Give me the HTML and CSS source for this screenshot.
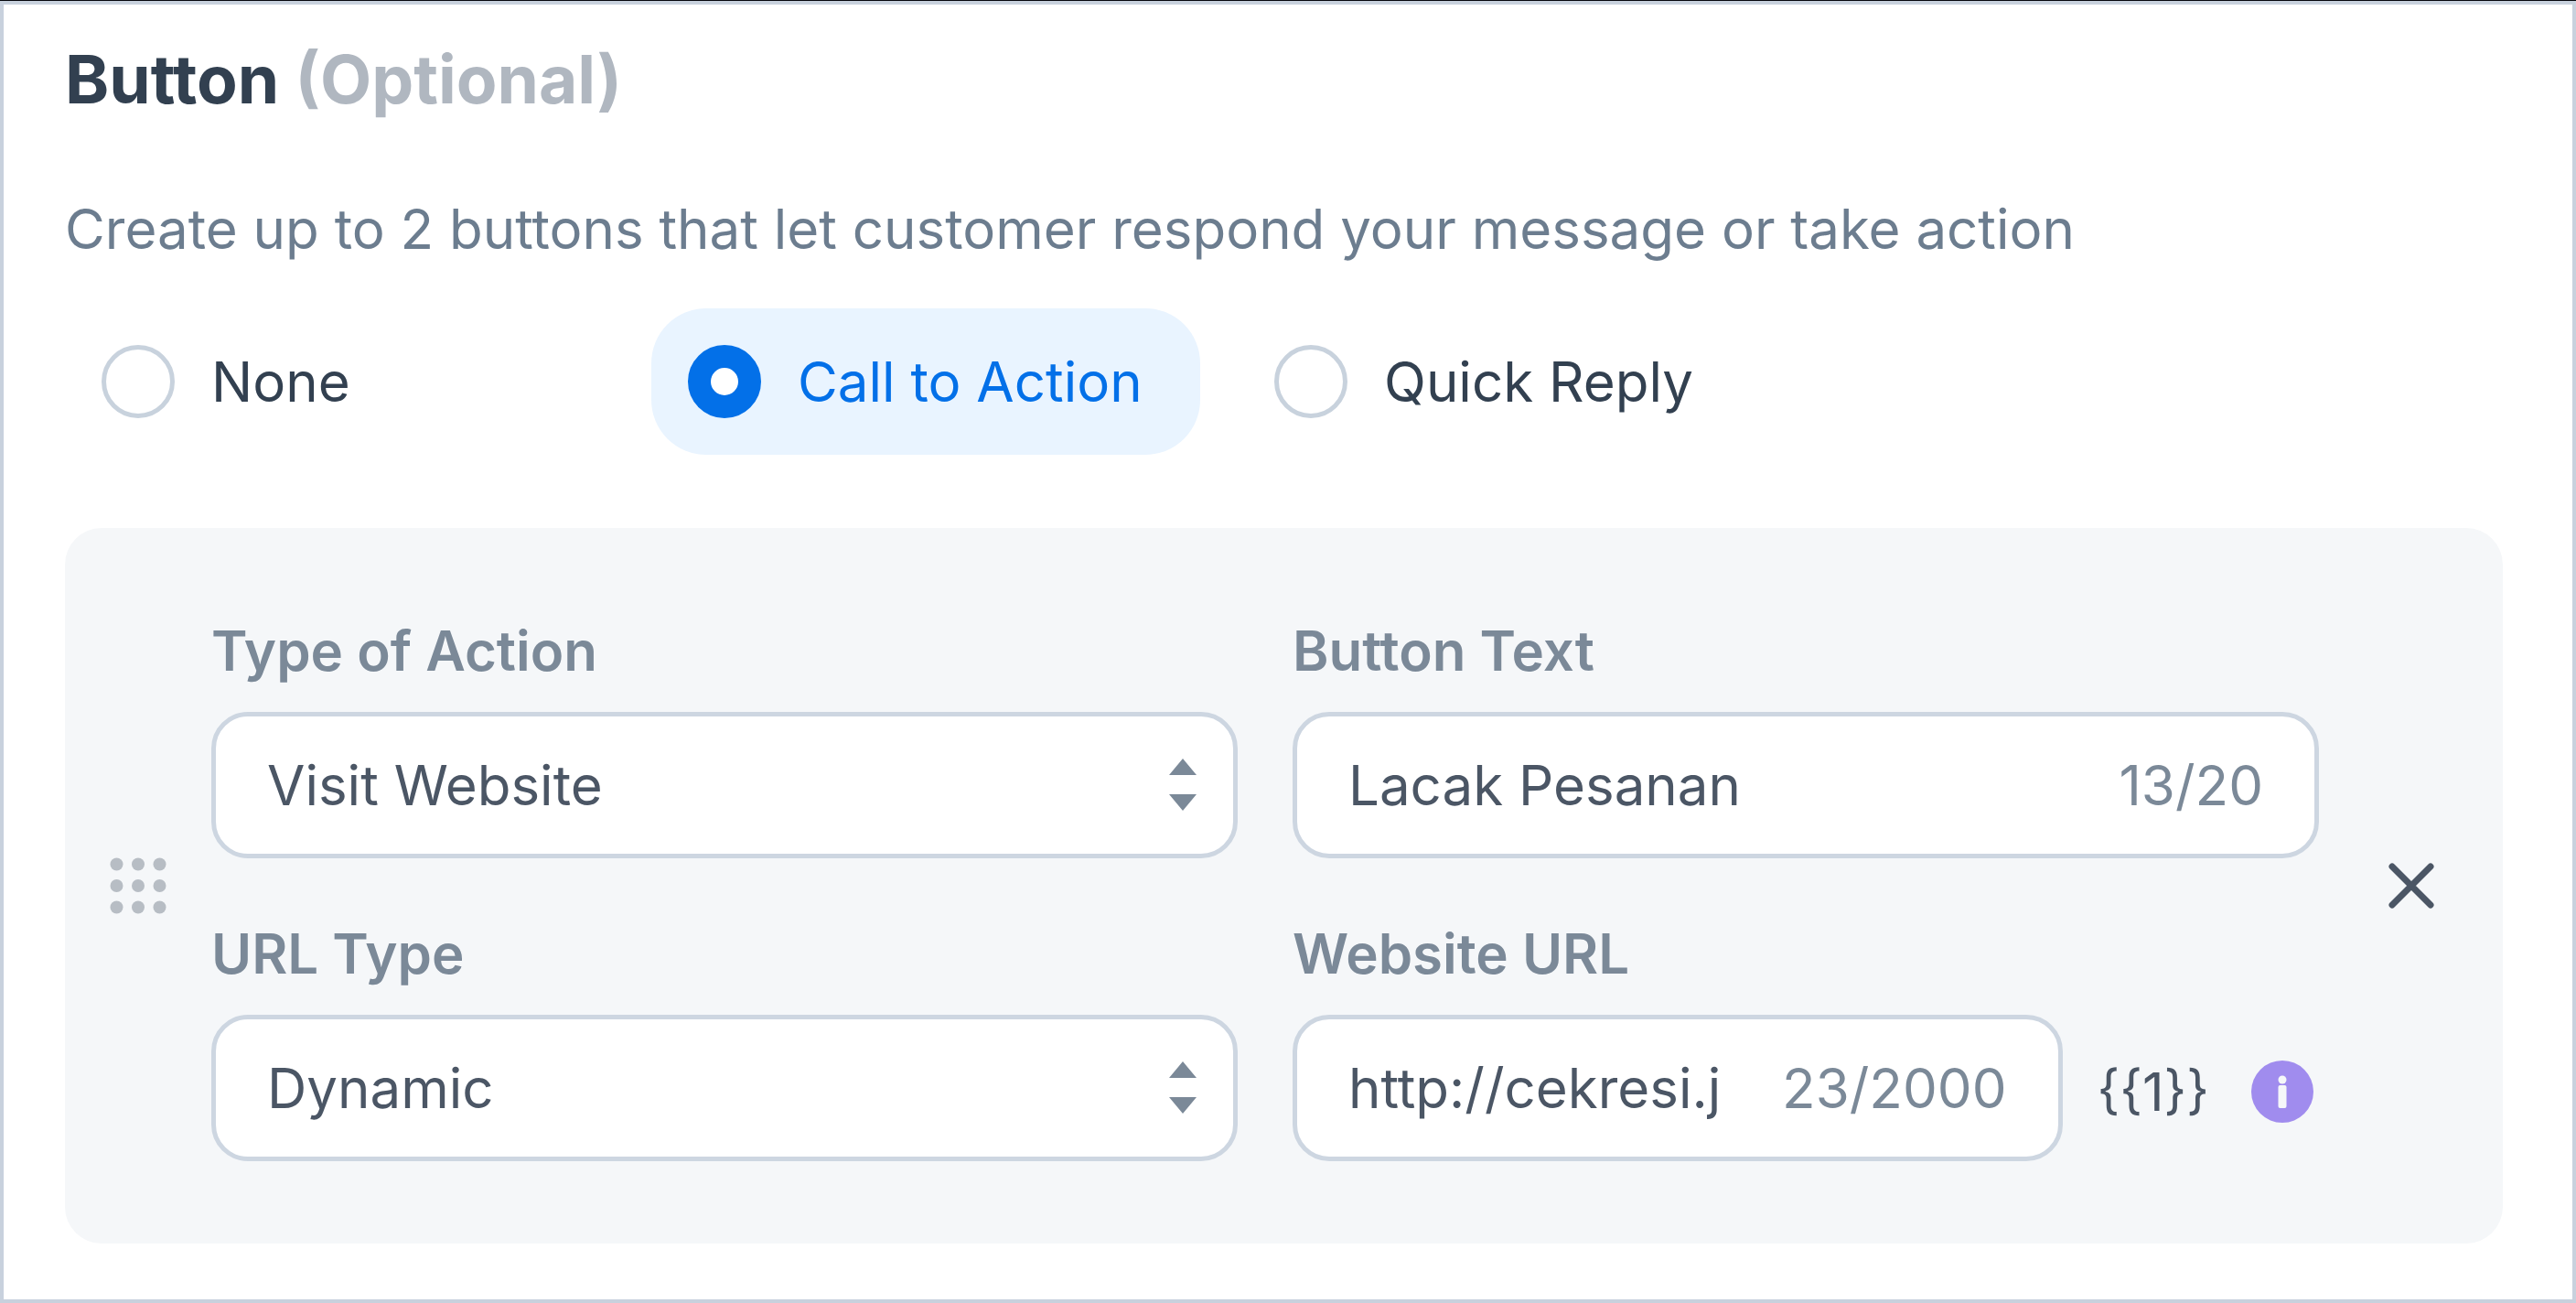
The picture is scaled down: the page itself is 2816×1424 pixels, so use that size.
FILE: index.html
```html
<!DOCTYPE html>
<html lang="en">
<head>
  <meta charset="utf-8">
  <meta name="viewport" content="width=device-width, initial-scale=1">
  <title>Message template buttons</title>
  <link rel="stylesheet" href="styles.css">
</head>
<body>
  <main class="panel">
    <h1 class="panel-title">Button <span class="panel-optional">(Optional)</span></h1>
    <p class="panel-text">Create up to 2 buttons that let customer respond your message or take action</p>

    <div class="options" role="radiogroup" aria-label="Button kind">
      <label class="option"><input class="option-radio" type="radio" name="kind"><span>None</span></label>
      <label class="option"><input class="option-radio" type="radio" name="kind" checked><span>Call to Action</span></label>
      <label class="option"><input class="option-radio" type="radio" name="kind"><span>Quick Reply</span></label>
    </div>

    <section class="card">
      <button class="card-side card-handle" type="button" aria-label="Reorder">
        <svg class="icon-grip" viewBox="0 0 62 62" aria-hidden="true">
          <circle cx="7.5" cy="7.5" r="7"/><circle cx="31" cy="7.5" r="7"/><circle cx="54.500" cy="7.5" r="7"/>
          <circle cx="7.5" cy="31" r="7"/><circle cx="31" cy="31" r="7"/><circle cx="54.500" cy="31" r="7"/>
          <circle cx="7.5" cy="54.500" r="7"/><circle cx="31" cy="54.500" r="7"/><circle cx="54.500" cy="54.500" r="7"/>
        </svg>
      </button>

      <div class="fields">
        <div class="field">
          <label class="field-label" for="action-type">Type of Action</label>
          <div class="control">
            <select class="control-input" id="action-type"><option>Visit Website</option></select>
            <svg class="icon-sort" viewBox="0 0 30 58" aria-hidden="true"><path d="M15 0 30 18H0zM0 39H30L15 57z"/></svg>
          </div>
        </div>
        <div class="field">
          <label class="field-label" for="button-text">Button Text</label>
          <div class="control">
            <input class="control-input" id="button-text" type="text" value="Lacak Pesanan">
            <span class="control-count">13/20</span>
          </div>
        </div>
        <div class="field">
          <label class="field-label" for="url-type">URL Type</label>
          <div class="control">
            <select class="control-input" id="url-type"><option>Dynamic</option></select>
            <svg class="icon-sort" viewBox="0 0 30 58" aria-hidden="true"><path d="M15 0 30 18H0zM0 39H30L15 57z"/></svg>
          </div>
        </div>
        <div class="field">
          <label class="field-label" for="website-url">Website URL</label>
          <div class="url-row">
            <div class="control">
              <input class="control-input" id="website-url" type="text" value="http://cekresi.j">
              <span class="control-count">23/2000</span>
            </div>
            <div class="url-extra">
              <span class="url-variable">{{1}}</span>
              <button class="info" type="button" aria-label="About variables">
                <svg class="icon-info" viewBox="0 0 68 68" aria-hidden="true">
                  <circle class="icon-info-disc" cx="34" cy="34" r="34"/>
                  <circle cx="34" cy="21" r="4.500"/>
                  <rect x="29.500" y="27" width="9" height="25" rx="2"/>
                </svg>
              </button>
            </div>
          </div>
        </div>
      </div>

      <button class="card-side card-close" type="button" aria-label="Remove button">
        <svg class="icon-close" viewBox="0 0 50 50" aria-hidden="true"><path d="M4 4 46 46M46 4 4 46"/></svg>
      </button>
    </section>
  </main>
</body>
</html>
```
FILE: styles.css
```css
* {
  box-sizing: border-box;
}

body {
  margin: 0;
  border-top: 1px solid #05070c;
  background: #fff;
  color: #4b5665;
  font-family: Inter, "Liberation Sans", sans-serif;
  font-size: 60px;
  line-height: 80px;
}

button,
input,
select {
  margin: 0;
  padding: 0;
  border: 0;
  background: none;
  color: inherit;
  font: inherit;
}

button {
  cursor: pointer;
}

.panel {
  min-height: calc(100vh - 1px);
  padding: 42px 76px 60px 67px;
  border: 4px solid #c8d1dd;
}

.panel-title {
  margin: 0 0 83px;
  color: #324050;
  font-size: 73px;
  font-weight: 700;
  line-height: 80px;
}

.panel-optional {
  color: #b0b7c0;
}

.panel-text {
  margin: 0 0 47px;
  color: #6c7d8f;
}

/* Radio options */

.options {
  display: flex;
  gap: 41px;
  margin-bottom: 80px;
}

.option {
  display: flex;
  align-items: center;
  gap: 40px;
  width: 600px;
  height: 160px;
  padding: 0 40px;
  border-radius: 60px;
  color: #324050;
  white-space: nowrap;
}

.option:has(:checked) {
  background: #e9f4ff;
  color: #0370e8;
}

.option-radio {
  flex: none;
  width: 80px;
  height: 80px;
  border: 5px solid #c8d2dd;
  border-radius: 50%;
  background: #fff;
  appearance: none;
}

.option-radio:checked {
  border: 25px solid #0370e8;
}

/* Button card */

.card {
  display: flex;
  border-radius: 40px;
  background: #f5f7f9;
}

.card-side {
  display: flex;
  flex: none;
  align-items: center;
  justify-content: center;
}

.card-handle {
  width: 160px;
}

.card-close {
  width: 201px;
}

.fields {
  display: grid;
  flex: 1;
  grid-template-columns: repeat(2, minmax(0, 1fr));
  gap: 64px 60px;
  padding: 94px 0 90px;
}

.field {
  display: flex;
  flex-direction: column;
  gap: 27px;
}

.field-label {
  color: #7b8998;
  font-weight: 600;
}

.control {
  position: relative;
  display: flex;
  align-items: center;
  gap: 60px;
  min-width: 0;
  height: 160px;
  padding: 0 56px;
  border: 5px solid #cdd6e1;
  border-radius: 40px;
  background: #fff;
}

.control-input {
  flex: 1;
  width: 0;
  min-width: 0;
  height: 100%;
  appearance: none;
}

.control-count {
  color: #7b8998;
}

.url-row {
  display: flex;
  gap: 38px;
}

.url-row .control {
  flex: 1;
}

.url-extra {
  display: flex;
  align-items: center;
  gap: 46px;
  padding: 8px 6px 0 0;
}

.url-variable {
  font-size: 58px;
}

.info {
  display: flex;
}

/* Icons */

.icon-grip {
  width: 62px;
  height: 62px;
  fill: #b7bdc4;
}

.icon-sort {
  position: absolute;
  right: 40px;
  width: 30px;
  height: 58px;
  fill: #7b8998;
  pointer-events: none;
}

.icon-close {
  width: 50px;
  height: 50px;
  fill: none;
  stroke: #4b5665;
  stroke-linecap: round;
  stroke-width: 7;
}

.icon-info {
  width: 68px;
  height: 68px;
  fill: #f5f7f9;
}

.icon-info-disc {
  fill: #a08cee;
}
```
